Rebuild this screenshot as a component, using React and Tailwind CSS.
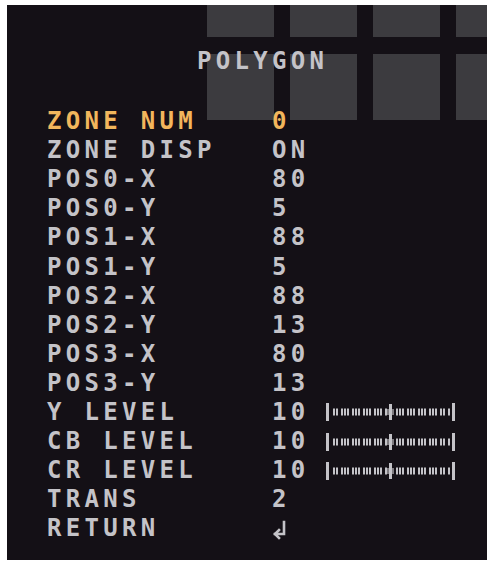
import React from "react";

const rows = [
  { label: "ZONE NUM", value: "0", active: true },
  { label: "ZONE DISP", value: "ON" },
  { label: "POS0-X", value: "80" },
  { label: "POS0-Y", value: "5" },
  { label: "POS1-X", value: "88" },
  { label: "POS1-Y", value: "5" },
  { label: "POS2-X", value: "88" },
  { label: "POS2-Y", value: "13" },
  { label: "POS3-X", value: "80" },
  { label: "POS3-Y", value: "13" },
  { label: "Y LEVEL", value: "10", bar: true },
  { label: "CB LEVEL", value: "10", bar: true },
  { label: "CR LEVEL", value: "10", bar: true },
  { label: "TRANS", value: "2" },
  { label: "RETURN", value: "enter" },
];

// small tick positions on each half of the level scale
const leftTicks = [7, 10, 15, 18, 21, 26, 29, 32, 37, 40, 43, 48, 51, 54, 59];
const rightTicks = [70, 73, 76, 81, 84, 87, 92, 95, 98, 103, 106, 109, 114, 117, 122];

function LevelBar() {
  return (
    <svg width="130" height="20" viewBox="0 0 130 20" className="ml-[22px]">
      <g fill="#c4c3c8">
        <rect x="0" y="1" width="3" height="18" />
        {leftTicks.map((x) => (
          <rect key={x} x={x} y="6.5" width="2" height="7" />
        ))}
        <rect x="63" y="2" width="3" height="16" />
        <rect x="61" y="7" width="7" height="6" opacity="0.6" />
        {rightTicks.map((x) => (
          <rect key={x} x={x} y="6.5" width="2" height="7" />
        ))}
        <rect x="126" y="1" width="3" height="18" />
      </g>
    </svg>
  );
}

function EnterGlyph() {
  return (
    <svg width="16" height="22" viewBox="0 0 16 22" className="mt-[3px]">
      <g fill="none" stroke="#c4c3c8" strokeWidth="2.6" strokeLinecap="square">
        <path d="M12 3 V15 H3" />
        <path d="M7 11 L3 15 L7 19" />
      </g>
    </svg>
  );
}

export default function App() {
  return (
    <div className="w-[487px] h-[565px] bg-white pl-[7px] pt-[5px] pb-[5px]">
      <div
        className="relative h-full bg-[#141016] overflow-hidden text-[24px] font-bold tracking-[4.3px] text-[#c4c3c8]"
        style={{ fontFamily: '"DejaVu Sans Mono", "Liberation Mono", monospace' }}
      >
        {/* camera picture behind the on-screen menu */}
        <div className="absolute left-[200px] top-0 grid grid-cols-[67px_67px_67px_67px] grid-rows-[32px_66px] gap-x-[16px] gap-y-[17px]">
          {Array.from({ length: 8 }).map((_, i) => (
            <div key={i} className="bg-[#3c3b3f]" />
          ))}
        </div>

        <div className="relative pt-[42px]">
          <div className="h-[29px] leading-[29px] pl-[190px]">POLYGON</div>

          <div className="mt-[31px] flex flex-col">
            {rows.map((row) => (
              <div
                key={row.label}
                className={`flex items-center h-[29.1px] leading-[29px] ${
                  row.active ? "text-[#f2b65c]" : ""
                }`}
              >
                <span className="w-[225px] pl-[40px] box-content whitespace-pre">
                  {row.label}
                </span>
                <span className="w-[32px] whitespace-pre">
                  {row.value === "enter" ? <EnterGlyph /> : row.value}
                </span>
                {row.bar && <LevelBar />}
              </div>
            ))}
          </div>
        </div>
      </div>
    </div>
  );
}
